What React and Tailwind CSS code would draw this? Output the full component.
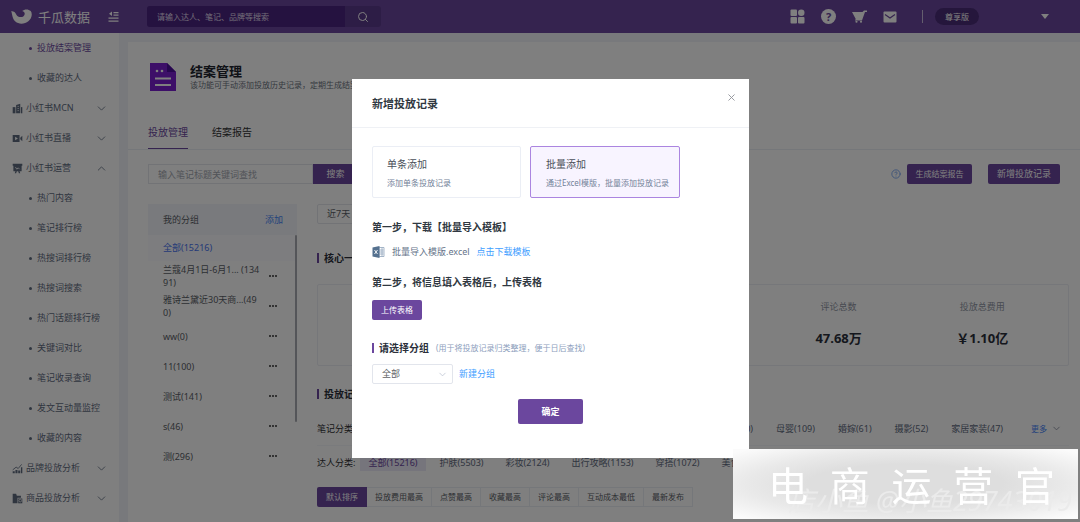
import React from "react";
import { ChevronDown, ChevronUp, CircleHelp, Search, X } from "lucide-react";

const icons = {
  mcn: (
    <>
      <path d="M1 6h4v9H1z" />
      <path d="M6 3l6-2v14H6z" />
      <path d="M13 6h2v9h-2z" />
      <path d="M8 5h2M8 8h2M8 11h2" stroke="#fff" strokeWidth="1" />
    </>
  ),
  live: (
    <>
      <path d="M1 3h10v10H1zM12 7l3-3v8l-3-3z" />
      <path d="M4.500 5.500v5l4-2.500z" fill="#fff" />
    </>
  ),
  operate: (
    <>
      <path d="M1 1h14v3h-1v8h-3l1 3h-2l-1-3H7l-1 3H4l1-3H2V4H1z" />
      <path d="M5 6l2 3 2-2 2 2" stroke="#fff" strokeWidth="1.200" fill="none" />
    </>
  ),
  brand: (
    <>
      <path d="M1 12h3v3H1zM5 10h3v5H5zM9 11h3v4H9zM13 6h2v9h-2z" />
      <path d="M1 10l5-4 3 2 5-6" stroke="currentColor" strokeWidth="1.200" fill="none" />
    </>
  ),
  goods: (
    <>
      <path d="M1 1h5l1 3h6v3H8v8H1z" />
      <path d="M9 8h6v7H9z" />
      <circle cx="12" cy="11" r="2" fill="none" stroke="#fff" />
    </>
  ),
};

const menu = [
  { label: "投放结案管理", active: true },
  { label: "收藏的达人" },
  { label: "小红书MCN", icon: "mcn" },
  { label: "小红书直播", icon: "live" },
  { label: "小红书运营", icon: "operate", open: true },
  { label: "热门内容" },
  { label: "笔记排行榜" },
  { label: "热搜词排行榜" },
  { label: "热搜词搜索" },
  { label: "热门话题排行榜" },
  { label: "关键词对比" },
  { label: "笔记收录查询" },
  { label: "发文互动量监控" },
  { label: "收藏的内容" },
  { label: "品牌投放分析", icon: "brand" },
  { label: "商品投放分析", icon: "goods" },
];

const groups = [
  ["兰蔻4月1日-6月1... (134", "91)"],
  ["雅诗兰黛近30天商...(49", "0)"],
  ["ww(0)"],
  ["11(100)"],
  ["测试(141)"],
  ["s(46)"],
  ["测(296)"],
  ["一二(12)"],
];

const noteTypes = ["宠物(130)", "母婴(109)", "婚嫁(61)", "摄影(52)", "家居家装(47)"];
const authorTypes = ["护肤(5503)", "彩妆(2124)", "出行攻略(1153)", "穿搭(1072)", "美食(986)"];
const sorts = ["默认排序", "投放费用最高", "点赞最高", "收藏最高", "评论最高", "互动成本最低", "最新发布"];

function Header() {
  return (
    <header className="flex h-[33px] shrink-0 items-center bg-[#6b479e] text-white">
      <div className="flex w-[147px] shrink-0 items-center pl-[11px]">
        <svg viewBox="0 0 60 44" className="h-[15px] w-[21px]" fill="currentColor" aria-hidden="true">
          <path d="M0 6C8 7 12 10 15 17c3 7 15 9 21 4 6-5 4-13-4-15 6-6 18-7 25 0 6 8 3 22-7 30-10 9-28 10-38 1C4 30 3 18 0 6z" />
        </svg>
        <span className="ml-[6px] text-[13px] leading-[18px]">千瓜数据</span>
        <button aria-label="收起菜单" className="ml-[18px]">
          <svg viewBox="0 0 22 22" className="size-[11px]" stroke="currentColor" strokeWidth="2.500" fill="currentColor">
            <path d="M11 3h10M11 8h10M1 14h20M1 20h20" />
            <path d="M8 1v9L2 5.500z" stroke="none" />
          </svg>
        </button>
      </div>
      <div className="flex h-[21px] w-[234px] items-center overflow-hidden rounded-[3px] bg-[#5b3a8c]">
        <input
          aria-label="搜索"
          placeholder="请输入达人、笔记、品牌等搜索"
          className="h-full min-w-0 flex-1 bg-[#4a2580] px-[10px] text-[8px] placeholder:text-[#e0d8ee]"
        />
        <button aria-label="搜索" className="flex w-[36px] justify-center">
          <Search className="size-[12px]" />
        </button>
      </div>
      <div className="ml-auto flex items-center pr-[31px]">
        <nav className="flex items-center gap-[16px]">
          <button aria-label="应用">
            <svg viewBox="0 0 30 30" className="size-[15px]" fill="currentColor">
              <rect x="1" y="1" width="13" height="13" rx="2" />
              <circle cx="22.500" cy="7.500" r="6.500" />
              <rect x="1" y="16" width="13" height="13" rx="2" />
              <rect x="16" y="16" width="13" height="13" rx="2" />
            </svg>
          </button>
          <button aria-label="帮助" className="flex size-[15px] items-center justify-center rounded-full bg-white text-[11px] leading-[15px] font-bold text-[#6b479e]">
            ?
          </button>
          <button aria-label="购物车">
            <svg viewBox="0 0 30 26" className="h-[13px] w-[15px]" fill="currentColor">
              <path d="M0 4h21l1-1 2-2h6v3h-4l-5 14-1 3H6v-2h2z" />
              <circle cx="9" cy="23.500" r="2.200" />
              <circle cx="18" cy="23.500" r="2.200" />
            </svg>
          </button>
          <button aria-label="消息">
            <svg viewBox="0 0 28 24" className="h-[12px] w-[14px]">
              <rect x="1" y="1" width="26" height="22" rx="2" fill="currentColor" />
              <path d="M4 7l10 7 10-7" fill="none" stroke="#6b479e" strokeWidth="2.500" />
            </svg>
          </button>
        </nav>
        <span className="ml-[25px] h-[13px] w-px bg-[#c9bddc]" />
        <span className="ml-[12px] rounded-full bg-[#4a2d78] px-[10px] text-[8px] leading-[17px]">尊享版</span>
        <button aria-label="账户菜单" className="ml-[62px]">
          <svg viewBox="0 0 8 5" className="h-[5px] w-[8px]" fill="currentColor">
            <path d="M0 0h8L4 5z" />
          </svg>
        </button>
      </div>
    </header>
  );
}

function Sidebar() {
  return (
    <nav className="w-[119px] shrink-0 overflow-hidden bg-white text-[9px] text-[#5f6b7f]">
      {menu.map((m) =>
        m.icon ? (
          <button key={m.label} className="flex h-[30px] w-full items-center pr-[11px] pl-[12px]">
            <svg viewBox="0 0 16 16" className="size-[11px]" fill="currentColor" aria-hidden="true">
              {icons[m.icon]}
            </svg>
            <span className="ml-[3px]">{m.label}</span>
            {m.open ? (
              <ChevronUp className="ml-auto size-[13px]" strokeWidth={1.5} />
            ) : (
              <ChevronDown className="ml-auto size-[13px]" strokeWidth={1.5} />
            )}
          </button>
        ) : (
          <a
            key={m.label}
            href="#"
            className={m.active ? "flex h-[30px] items-center pl-[29px] text-[#6b479e]" : "flex h-[30px] items-center pl-[29px]"}
          >
            <span className="mr-[5px] size-[3px] rounded-full bg-current" />
            {m.label}
          </a>
        )
      )}
    </nav>
  );
}

function Groups() {
  return (
    <aside className="w-[149px] shrink-0 text-[9px] text-[#5a5e66]">
      <div className="flex h-[31px] items-center justify-between bg-[#f2f5fa] pr-[14px] pl-[15px]">
        <span>我的分组</span>
        <button className="text-[#4a86f7]">添加</button>
      </div>
      <div className="flex h-[247px] overflow-hidden">
        <div className="flex-1">
          <button className="flex h-[26px] w-full items-center bg-[#fafbfe] pl-[15px] text-[#4a73f0]">全部(15216)</button>
          {groups.map((g) => (
            <div key={g[0]} className="flex h-[30px] items-center justify-between pr-[18px] pl-[15px] leading-[13px]">
              <span className="whitespace-nowrap">
                {g[0]}
                {g[1] && <br />}
                {g[1]}
              </span>
              <button aria-label="更多操作" className="flex gap-px">
                <i className="size-[2px] rounded-full bg-[#333]" />
                <i className="size-[2px] rounded-full bg-[#333]" />
                <i className="size-[2px] rounded-full bg-[#333]" />
              </button>
            </div>
          ))}
        </div>
        <div className="h-[187px] w-[2px] rounded bg-[#a8abb2]" />
      </div>
    </aside>
  );
}

function Heading({ children }) {
  return (
    <h2 className="flex items-center text-[10px] leading-[14px] font-bold text-[#2b2f3a]">
      <span className="mr-[5px] h-[10px] w-[2px] bg-[#6b479e]" />
      {children}
    </h2>
  );
}

function Stat({ label, value, className }) {
  return (
    <div className={className}>
      <div className="text-[9px] leading-[12px] text-[#8f95a3]">{label}</div>
      <div className="mt-[16px] text-[13px] leading-[18px] font-bold text-[#2b2f3a]">{value}</div>
    </div>
  );
}

function Content() {
  return (
    <main className="min-w-0 flex-1 overflow-hidden bg-white">
      <div className="flex h-[70px] items-center pl-[22px]">
        <svg viewBox="0 0 26 28" className="h-[28px] w-[26px]" aria-hidden="true">
          <path d="M0 0h17l9 9v19H0z" fill="#7a1fd0" />
          <path d="M17 0l9 9h-9z" fill="#4d0f9c" />
          <path d="M5 15.500h16M5 22h16" stroke="#fff" strokeWidth="2" />
          <circle cx="7" cy="8" r="1.300" fill="#fff" />
          <circle cx="12" cy="8" r="1.300" fill="#fff" />
        </svg>
        <div className="ml-[14px]">
          <h1 className="text-[13px] leading-[16px] font-bold text-[#20242e]">结案管理</h1>
          <p className="text-[8px] leading-[12px] text-[#6b7280]">该功能可手动添加投放历史记录，定期生成结案报告</p>
        </div>
      </div>
      <div className="flex h-[38px] items-end gap-[24px] border-b border-[#ebeef5] pl-[20px] text-[10px] leading-[14px]">
        <button className="border-b border-[#6b479e] pb-[9px] text-[#6b479e]">投放管理</button>
        <button className="border-b border-transparent pb-[9px] text-[#303133]">结案报告</button>
      </div>
      <div className="flex items-center pt-[14px] pr-[20px] pl-[20px]">
        <input
          aria-label="关键词"
          placeholder="输入笔记标题关键词查找"
          className="h-[20px] w-[165px] border border-[#e4e7ed] px-[9px] text-[9px] placeholder:text-[#a3a7b0]"
        />
        <button className="h-[20px] w-[45px] rounded-r-[2px] bg-[#6b479e] text-[9px] text-white">搜索</button>
        <CircleHelp className="ml-auto size-[10px] text-[#6f9df0]" />
        <button className="ml-[6px] h-[20px] w-[65px] rounded-[2px] bg-[#6b479e] text-[8px] text-white">生成结案报告</button>
        <button className="ml-[16px] h-[20px] w-[72px] rounded-[2px] bg-[#6b479e] text-[9px] text-white">新增投放记录</button>
      </div>
      <div className="flex gap-[20px] pt-[20px] pr-[11px] pl-[20px]">
        <Groups />
        <section className="min-w-0 flex-1">
          <button className="block h-[20px] w-[60px] rounded-[2px] border border-[#e4e7ed] pl-[9px] text-left text-[9px] text-[#5a5e66]">近7天</button>
          <div className="mt-[27px]">
            <Heading>核心一览</Heading>
          </div>
          <div className="mt-[19px] grid h-[82px] grid-cols-5 rounded-[2px] border border-[#eceef5] pt-[16px] pr-[14px] pl-[18px] text-center">
            <Stat className="col-start-4" label="评论总数" value="47.68万" />
            <Stat label="投放总费用" value="￥1.10亿" />
          </div>
          <div className="mt-[21px]">
            <Heading>投放记录</Heading>
          </div>
          <div className="mt-[11px] flex h-[34px] items-center border-b border-[#f5f6fa] text-[9px] whitespace-nowrap text-[#5f6b7f]">
            <span className="text-[#303133]">笔记分类:</span>
            <div className="ml-auto flex gap-[23px]">
              {noteTypes.map((t) => (
                <a key={t} href="#">{t}</a>
              ))}
            </div>
            <button className="ml-[28px] flex items-center gap-[4px] pr-[7px] text-[8px] text-[#4a86f7]">
              更多
              <ChevronDown className="size-[11px] text-[#8f95a3]" />
            </button>
          </div>
          <div className="flex h-[34px] items-center overflow-hidden text-[9px] whitespace-nowrap text-[#5f6b7f]">
            <span className="text-[#303133]">达人分类:</span>
            <a href="#" className="ml-[5px] bg-[#eceaf8] px-[8px] leading-[16px] text-[#6b479e]">全部(15216)</a>
            <div className="ml-[14px] flex gap-[22px]">
              {authorTypes.map((t) => (
                <a key={t} href="#">{t}</a>
              ))}
            </div>
          </div>
          <div className="mt-[7px] flex text-[8px] text-[#5a5e66]">
            {sorts.map((s, i) => (
              <button
                key={s}
                className={
                  i === 0
                    ? "h-[20px] rounded-l-[2px] bg-[#6b479e] px-[9px] text-white"
                    : "h-[20px] border-y border-r border-[#ebeef5] px-[8px]"
                }
              >
                {s}
              </button>
            ))}
          </div>
        </section>
      </div>
    </main>
  );
}

function Dialog() {
  return (
    <div className="fixed inset-0 flex items-start justify-center bg-black/50 pt-[79px] pl-[21px]">
      <div role="dialog" aria-label="新增投放记录" className="w-[397px] bg-white pb-[34px] text-[#303841]">
        <div className="flex h-[49px] items-center justify-between border-b border-[#eff1f5] pt-[2px] pr-[12px] pl-[20px]">
          <h2 className="text-[11px] font-bold">新增投放记录</h2>
          <button aria-label="关闭" className="mb-[14px]">
            <X className="size-[11px] text-[#909399]" strokeWidth={2} />
          </button>
        </div>
        <div className="px-[20px] pt-[18px]">
          <div className="flex gap-[9px] text-left">
            <button className="h-[52px] w-[149px] rounded-[2px] border border-[#ebeef5] pt-[2px] pl-[14px] text-left">
              <span className="block text-[10px] leading-[16px] text-[#4a4f59]">单条添加</span>
              <span className="mt-[4px] block text-[8px] leading-[14px] text-[#738299]">添加单条投放记录</span>
            </button>
            <button aria-pressed="true" className="h-[52px] w-[150px] rounded-[2px] border border-[#ab85e0] bg-[#f8f4ff] pt-[2px] pl-[15px] text-left">
              <span className="block text-[10px] leading-[16px] text-[#4a4f59]">批量添加</span>
              <span className="mt-[4px] block text-[8px] leading-[14px] whitespace-nowrap text-[#738299]">通过Excel模版，批量添加投放记录</span>
            </button>
          </div>
          <h3 className="mt-[22px] text-[10px] leading-[14px] font-bold">第一步，下载【批量导入模板】</h3>
          <div className="mt-[10px] flex items-center text-[9px] leading-[16px]">
            <svg viewBox="0 0 26 24" className="h-[12px] w-[13px]" aria-hidden="true">
              <path d="M14 3h10v18H14z" fill="#fff" stroke="#8ba0b8" strokeWidth="1.500" />
              <path d="M15 8h8M15 12h8M15 16h8M20 3v18" stroke="#8ba0b8" strokeWidth="1.500" />
              <path d="M1 3l14-3v24L1 21z" fill="#55718f" />
              <path d="M5 8l6 8M11 8l-6 8" stroke="#fff" strokeWidth="1.800" />
            </svg>
            <span className="ml-[7px] text-[#66748a]">批量导入模版.excel</span>
            <a href="#" className="ml-[7px] text-[#409eff]">点击下载模板</a>
          </div>
          <h3 className="mt-[15px] text-[10px] leading-[14px] font-bold">第二步，将信息填入表格后，上传表格</h3>
          <button className="mt-[11px] block h-[20px] w-[50px] rounded-[2px] bg-[#6b479e] text-[8px] text-white">上传表格</button>
          <div className="mt-[21px] flex items-center">
            <Heading>请选择分组</Heading>
            <span className="ml-[7px] text-[8px] leading-[14px] text-[#8da0bd]">(用于将投放记录归类整理，便于日后查找)</span>
          </div>
          <div className="mt-[9px] flex items-center text-[9px]">
            <div className="relative">
              <select aria-label="分组" className="block h-[20px] w-[81px] appearance-none rounded-[2px] border border-[#e2e5ec] bg-white pl-[9px] text-[#606266]">
                <option>全部</option>
              </select>
              <ChevronDown className="pointer-events-none absolute top-[5px] right-[5px] size-[11px] text-[#b4bccc]" strokeWidth={1.5} />
            </div>
            <button className="ml-[6px] text-[#409eff]">新建分组</button>
          </div>
          <div className="mt-[15px] flex justify-center">
            <button className="h-[25px] w-[65px] rounded-[2px] bg-[#6b479e] text-[9px] font-bold text-white">确定</button>
          </div>
        </div>
      </div>
    </div>
  );
}

function Watermark() {
  return (
    <div className="fixed right-[2px] bottom-[3px] h-[70px] w-[345px] bg-[radial-gradient(ellipse_at_center,#dedede_40%,#e9e9e9_65%,#fbfbfb_95%)]">
      <div className="absolute right-[6px] bottom-[2px] text-[27px] leading-[32px] whitespace-nowrap text-[#ebebeb] italic">店小鱼 @小鱼29743019</div>
      <div className="relative flex h-full items-center justify-between pr-[23px] pl-[35px] font-['Noto_Sans_CJK_SC'] text-[40px] text-white">
        {["电", "商", "运", "营", "官"].map((c) => (
          <span key={c}>{c}</span>
        ))}
      </div>
    </div>
  );
}

export default function App() {
  return (
    <div lang="zh-CN" className="flex h-screen flex-col overflow-hidden bg-[#f0f3f8] font-['Noto_Sans','Noto_Sans_CJK_SC',sans-serif]">
      <Header />
      <div className="flex min-h-0 flex-1">
        <Sidebar />
        <div className="flex min-w-0 flex-1 pt-[9px] pl-[9px]">
          <Content />
        </div>
      </div>
      <Dialog />
      <Watermark />
    </div>
  );
}
